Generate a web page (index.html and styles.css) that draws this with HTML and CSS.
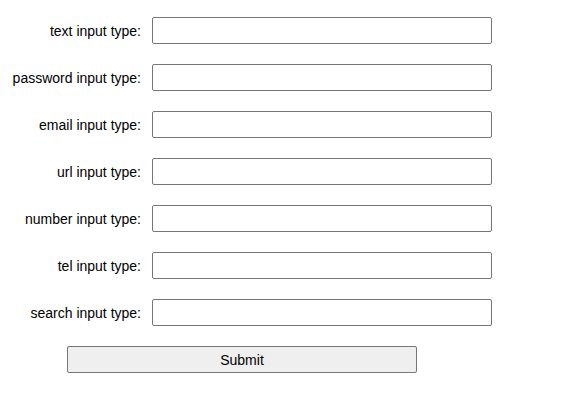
FILE: index.html
```
<!DOCTYPE html>
<html>
<head>
<meta charset="utf-8">
<link rel="stylesheet" href="styles.css">
</head>
<body>
<form class="form">
  <label class="label" for="t1">text input type:</label>
  <input class="field" id="t1" type="text">
  <label class="label" for="t2">password input type:</label>
  <input class="field" id="t2" type="password">
  <label class="label" for="t3">email input type:</label>
  <input class="field" id="t3" type="email">
  <label class="label" for="t4">url input type:</label>
  <input class="field" id="t4" type="url">
  <label class="label" for="t5">number input type:</label>
  <input class="field" id="t5" type="number">
  <label class="label" for="t6">tel input type:</label>
  <input class="field" id="t6" type="tel">
  <label class="label" for="t7">search input type:</label>
  <input class="field" id="t7" type="search">
  <button class="submit" type="button">Submit</button>
</form>
</body>
</html>
```
FILE: styles.css
```
html, body {
  margin: 0;
  padding: 0;
  background: #ffffff;
}
body {
  font-family: "Liberation Sans", Arial, sans-serif;
  font-size: 14px;
  color: #000000;
}
.form {
  display: grid;
  grid-template-columns: 133px 340px;
  column-gap: 11px;
  row-gap: 20px;
  align-items: center;
  padding: 17px 0 0 8px;
}
.label {
  text-align: right;
  font-size: 14px;
  color: #000;
}
.field {
  box-sizing: border-box;
  width: 340px;
  height: 27px;
  margin: 0;
  border: 1px solid #767676;
  border-radius: 2px;
  background: #fff;
  padding: 1px 2px;
  font-family: "Liberation Sans", Arial, sans-serif;
  font-size: 14px;
  -moz-appearance: textfield;
  appearance: none;
}
.field::-webkit-inner-spin-button,
.field::-webkit-outer-spin-button,
.field::-webkit-search-cancel-button {
  -webkit-appearance: none;
  margin: 0;
}
.submit {
  grid-column: 1 / span 2;
  justify-self: start;
  box-sizing: border-box;
  width: 350px;
  height: 27px;
  margin: 0 0 0 59px;
  border: 1px solid #767676;
  border-radius: 2px;
  background: #efefef;
  font-family: "Liberation Sans", Arial, sans-serif;
  font-size: 14px;
  color: #000;
  padding: 0;
}
```
